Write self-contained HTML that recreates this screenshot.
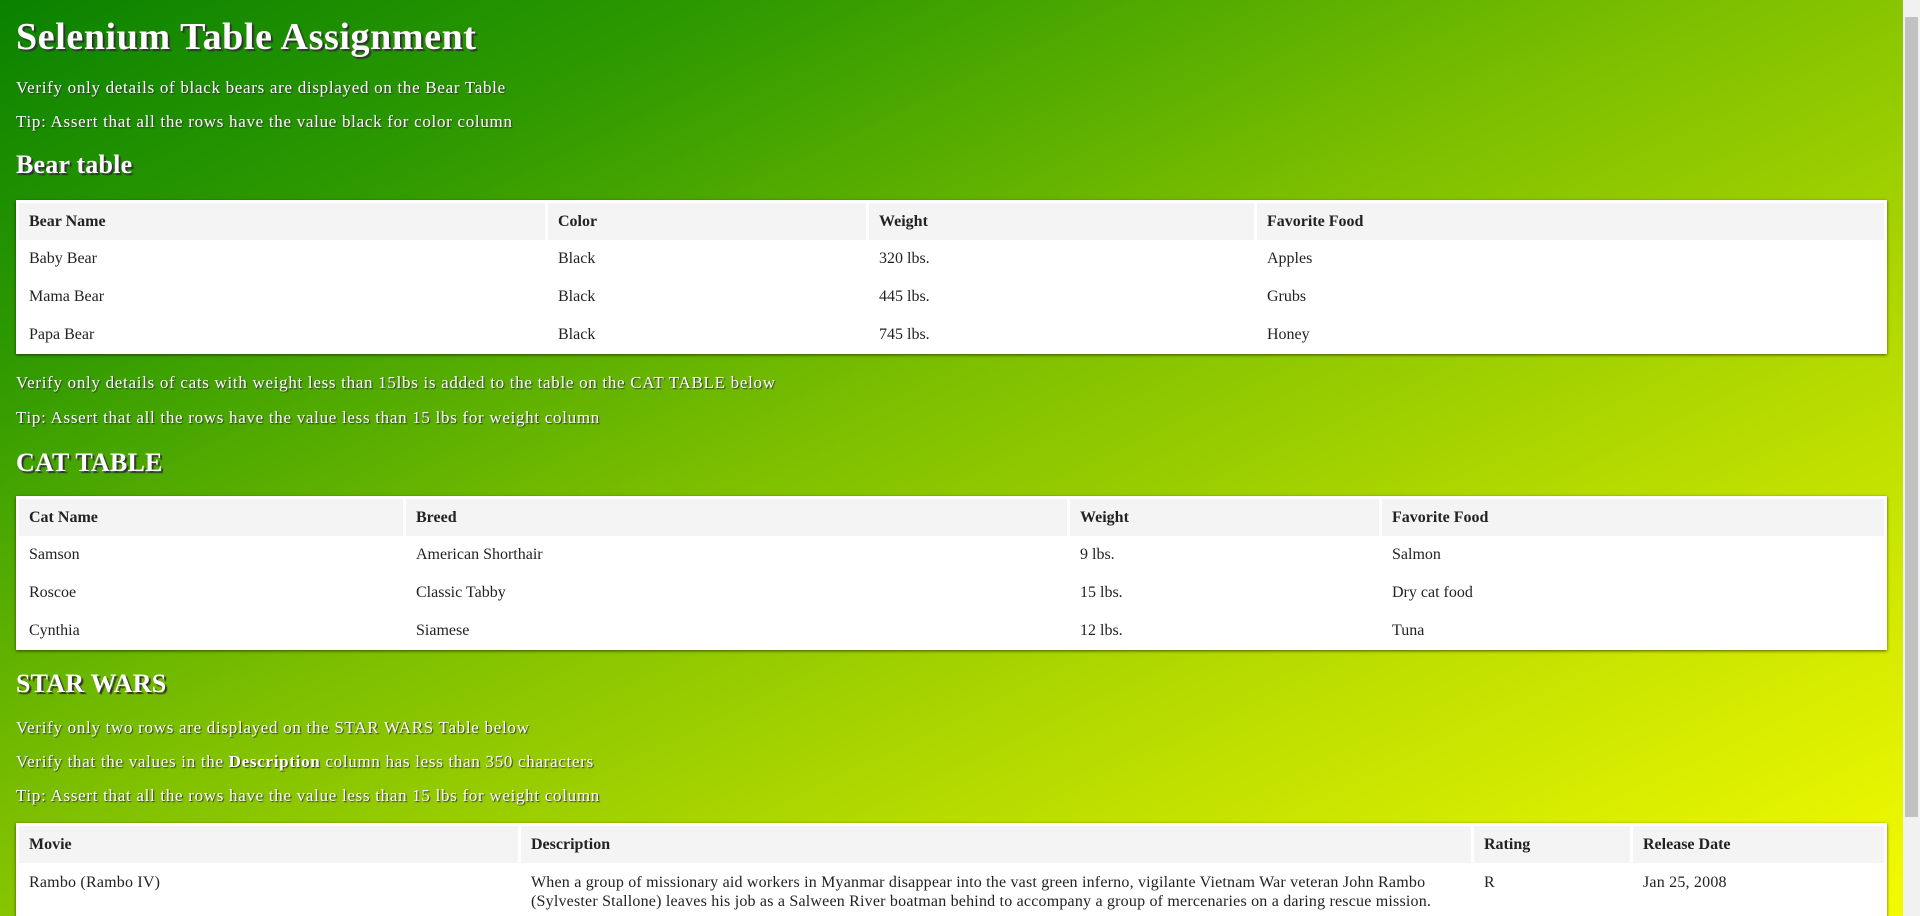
<!DOCTYPE html>
<html><head><meta charset="utf-8"><style>
html,body{margin:0;padding:0;width:1920px;height:916px;overflow:hidden;}
body{font-family:"Liberation Serif","DejaVu Serif",serif;color:#fff;position:relative;
background:linear-gradient(to bottom right,#0a8200 0%,#2f9a00 20%,#7cbf00 45%,#b8dc00 70%,#f4fb00 100%);background-size:1903px 916px;background-repeat:no-repeat;}
.sb{position:absolute;left:1903px;top:0;width:17px;height:916px;background:#f1f1f1;}
.sb i{position:absolute;left:2px;top:17px;width:13px;height:800px;background:#c1c1c1;}
.t{position:absolute;left:16px;white-space:nowrap;text-shadow:1px 1px 1px #333;}
.h1{font-size:38px;font-weight:bold;letter-spacing:0.6px;text-shadow:2px 2px 1px #333;}
.h2{font-size:26px;font-weight:bold;letter-spacing:0.2px;text-shadow:2px 2px 1px #333;}
.p{font-size:17px;letter-spacing:0.7px;}
table{position:absolute;left:16px;width:1871px;background:#fff;border-collapse:separate;border-spacing:3px 0;padding:3px 0 0;box-shadow:0 1px 3px rgba(0,0,0,.6);color:#222;font-size:16px;table-layout:fixed;}
th{background:#f4f4f4;text-align:left;padding:0 10px;height:37px;font-weight:bold;}
td{padding:0 10px;height:38px;vertical-align:middle;}
.sw td{vertical-align:top;padding-top:10px;height:50px;line-height:19px;letter-spacing:0.2px}
</style></head><body>
<div class="t h1" style="top:15px">Selenium Table Assignment</div>
<div class="t p" style="top:78px">Verify only details of black bears are displayed on the Bear Table</div>
<div class="t p" style="top:112px">Tip: Assert that all the rows have the value black for color column</div>
<div class="t h2" style="top:150px">Bear table</div>
<table style="top:200px"><colgroup><col style="width:526px"><col style="width:318px"><col style="width:385px"><col></colgroup>
<tr><th>Bear Name</th><th>Color</th><th>Weight</th><th>Favorite Food</th></tr>
<tr><td>Baby Bear</td><td>Black</td><td>320 lbs.</td><td>Apples</td></tr>
<tr><td>Mama Bear</td><td>Black</td><td>445 lbs.</td><td>Grubs</td></tr>
<tr><td>Papa Bear</td><td>Black</td><td>745 lbs.</td><td>Honey</td></tr></table>
<div class="t p" style="top:373px">Verify only details of cats with weight less than 15lbs is added to the table on the CAT TABLE below</div>
<div class="t p" style="top:408px">Tip: Assert that all the rows have the value less than 15 lbs for weight column</div>
<div class="t h2" style="top:448px">CAT TABLE</div>
<table style="top:496px"><colgroup><col style="width:384px"><col style="width:661px"><col style="width:309px"><col></colgroup>
<tr><th>Cat Name</th><th>Breed</th><th>Weight</th><th>Favorite Food</th></tr>
<tr><td>Samson</td><td>American Shorthair</td><td>9 lbs.</td><td>Salmon</td></tr>
<tr><td>Roscoe</td><td>Classic Tabby</td><td>15 lbs.</td><td>Dry cat food</td></tr>
<tr><td>Cynthia</td><td>Siamese</td><td>12 lbs.</td><td>Tuna</td></tr></table>
<div class="t h2" style="top:669px">STAR WARS</div>
<div class="t p" style="top:718px">Verify only two rows are displayed on the STAR WARS Table below</div>
<div class="t p" style="top:752px">Verify that the values in the <b>Description</b> column has less than 350 characters</div>
<div class="t p" style="top:786px">Tip: Assert that all the rows have the value less than 15 lbs for weight column</div>
<table class="sw" style="top:823px"><colgroup><col style="width:499px"><col style="width:950px"><col style="width:156px"><col></colgroup>
<tr><th>Movie</th><th>Description</th><th>Rating</th><th>Release Date</th></tr>
<tr><td>Rambo (Rambo IV)</td><td>When a group of missionary aid workers in Myanmar disappear into the vast green inferno, vigilante Vietnam War veteran John Rambo (Sylvester Stallone) leaves his job as a Salween River boatman behind to accompany a group of mercenaries on a daring rescue mission.</td><td>R</td><td>Jan 25, 2008</td></tr></table>
<div class="sb"><i></i></div>
</body></html>
